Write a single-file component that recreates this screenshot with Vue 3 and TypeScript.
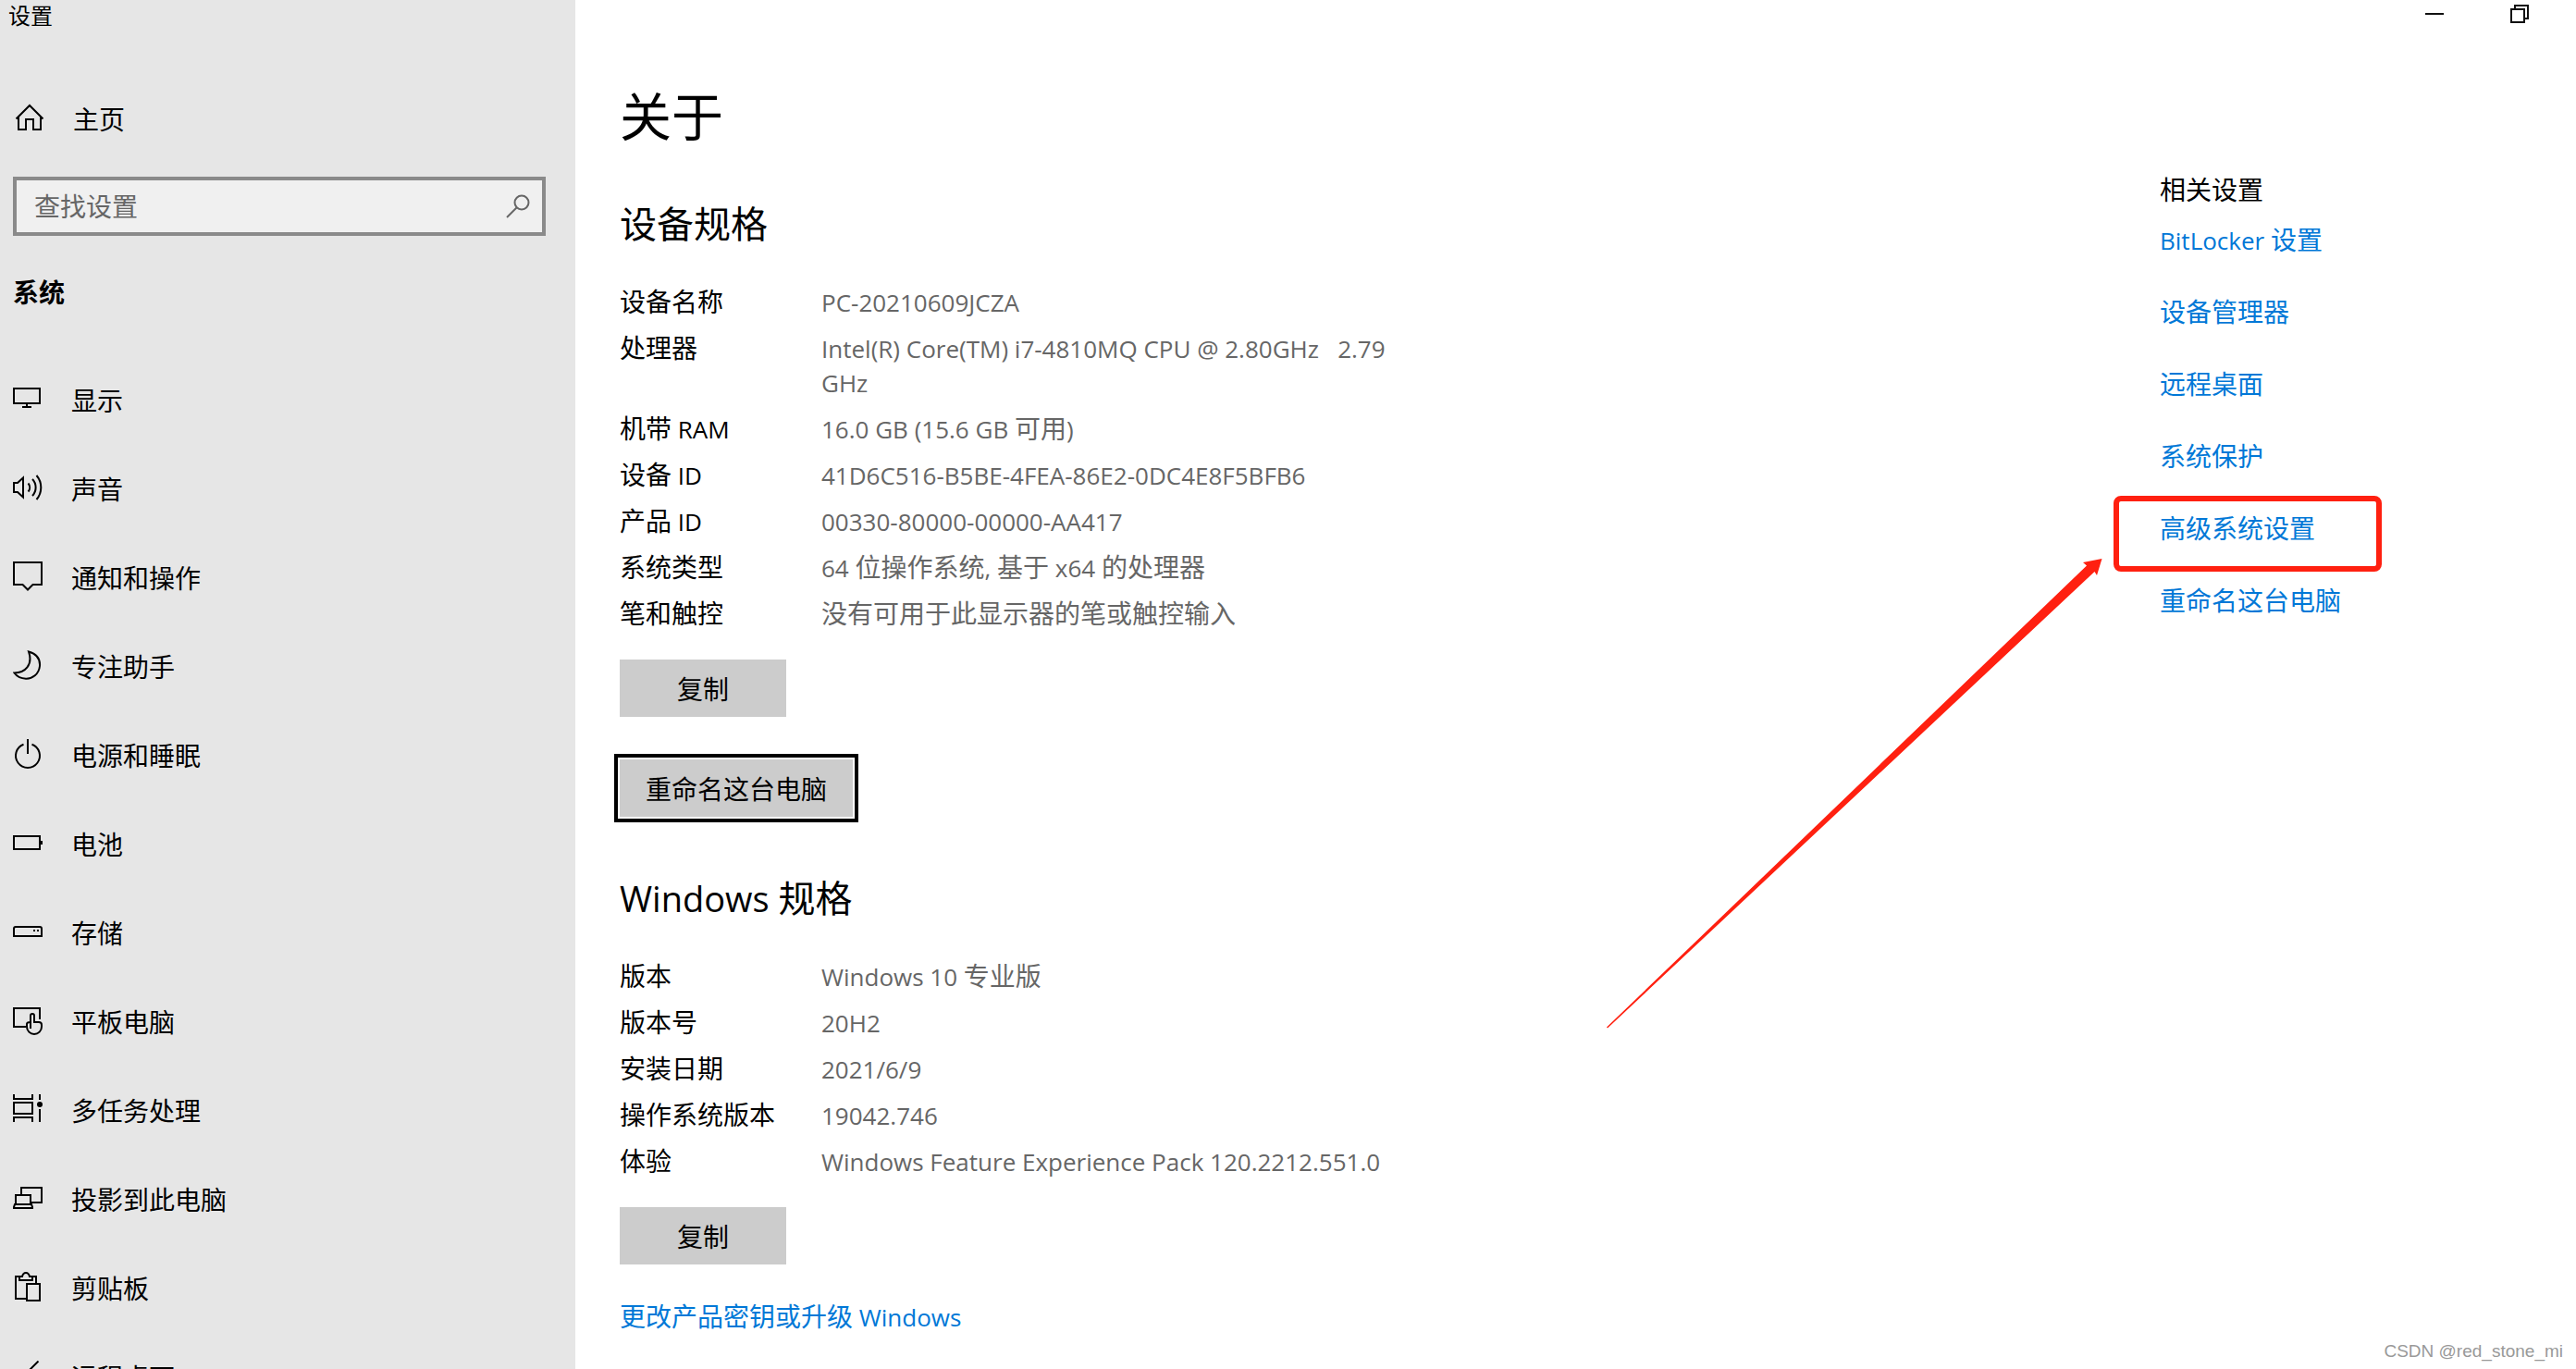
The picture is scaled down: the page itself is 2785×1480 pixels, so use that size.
<script setup lang="ts">
import { ref } from 'vue'

interface Run {
  text: string
  latin: boolean
}

interface Spec {
  label: string
  value: string
}

interface NavItem {
  label: string
  /** Stroked outlines on a 32 x 32 grid. */
  path: string
  /** Solid parts on the same grid. */
  solid?: string
}

const query = ref('')

/** Splits mixed text so that Latin runs can be set a little smaller than the Chinese ones. */
function runs(text: string): Run[] {
  const parts = text.match(/[\u0020-\u00ff]+|[^\u0020-\u00ff]+/g) ?? []
  return parts.map((part) => ({ text: part, latin: /[\u0020-\u00ff]/.test(part) }))
}

const navItems: NavItem[] = [
  { label: '显示', path: 'M1 5H29V21H1ZM15 21V25M10 25H20' },
  {
    label: '声音',
    path: 'M1 11H5L11 5.5V26.5L5 21H1ZM16.5 11.5A7 7 0 0 1 16.5 20.5M21 7A13 13 0 0 1 21 25M25.5 3A20 20 0 0 1 25.5 29',
  },
  { label: '通知和操作', path: 'M1 1H31V25H21.5L16 30.5L10.5 25H1Z' },
  { label: '专注助手', path: 'M17 1.5C26 4 29.5 10 29 17C28 26 21 31 14 30.7C8 30.5 4 28 1.5 24.5C13 24.5 22 16 17 1.5Z' },
  { label: '电源和睡眠', path: 'M16 0V16M11.5 5.8A13 13 0 1 0 20.5 5.8' },
  { label: '电池', path: 'M1 9H29V23H1Z', solid: 'M30 14H32V18H30Z' },
  {
    label: '存储',
    path: 'M1 21V13Q1 11 3 11H29Q31 11 31 13V21Z',
    solid: 'M22 14H24V16H22ZM26 14H28V16H26Z',
  },
  {
    label: '平板电脑',
    path: 'M14 23H1V3H29V15M19 25V11A2 2 0 0 1 23 11V18H28Q31 18 31 21V23A8 8 0 0 1 15 23V20Q15 18 19 18',
  },
  {
    label: '多任务处理',
    path: 'M1 0V5H21V0M1 9H21V21H1ZM1 30V25H21V30M29 0V6M29 16V30',
    solid: 'M26 11A3 3 0 1 0 32 11A3 3 0 1 0 26 11Z',
  },
  { label: '投影到此电脑', path: 'M9 12V5H31V21H20M3 22V13H19V22M2 23H20L21 26V27H1V26Z' },
  {
    label: '剪贴板',
    path: 'M14 29H3V5H10M18 5H25V13M7 5V9H21V5H18Q17 1 14 1Q11 1 10 5H7M15 13H29V31H15Z',
  },
  { label: '远程桌面', path: 'M27.5 .5L14 14L27.5 27.5M4 12L14 20L4 28' },
]

const deviceSpecs: Spec[] = [
  { label: '设备名称', value: 'PC-20210609JCZA' },
  { label: '处理器', value: 'Intel(R) Core(TM) i7-4810MQ CPU @ 2.80GHz\u00a0\u00a0 2.79 GHz' },
  { label: '机带 RAM', value: '16.0 GB (15.6 GB 可用)' },
  { label: '设备 ID', value: '41D6C516-B5BE-4FEA-86E2-0DC4E8F5BFB6' },
  { label: '产品 ID', value: '00330-80000-00000-AA417' },
  { label: '系统类型', value: '64 位操作系统, 基于 x64 的处理器' },
  { label: '笔和触控', value: '没有可用于此显示器的笔或触控输入' },
]

const windowsSpecs: Spec[] = [
  { label: '版本', value: 'Windows 10 专业版' },
  { label: '版本号', value: '20H2' },
  { label: '安装日期', value: '2021/6/9' },
  { label: '操作系统版本', value: '19042.746' },
  { label: '体验', value: 'Windows Feature Experience Pack 120.2212.551.0' },
]

const relatedLinks: { label: string; marked?: boolean }[] = [
  { label: 'BitLocker 设置' },
  { label: '设备管理器' },
  { label: '远程桌面' },
  { label: '系统保护' },
  { label: '高级系统设置', marked: true },
  { label: '重命名这台电脑' },
]

function copySpecs(specs: Spec[]): void {
  navigator.clipboard?.writeText(specs.map((s) => `${s.label}\t${s.value}`).join('\n'))
}
</script>

<template>
  <div class="window">
    <aside class="sidebar">
      <div class="app-title">设置</div>
      <a class="home" href="#home">
        <svg class="icon" viewBox="0 0 32 32" aria-hidden="true">
          <path d="M1.5 17.5L16 3L30.5 17.5M4 15V29H12V18H20V29H28V15" />
        </svg>
        <span>主页</span>
      </a>
      <form class="search" role="search" @submit.prevent>
        <input v-model="query" type="text" placeholder="查找设置" aria-label="查找设置" />
        <button type="submit" aria-label="搜索">
          <svg viewBox="0 0 26 26" aria-hidden="true">
            <circle cx="17" cy="9" r="7.5" />
            <path d="M11.5 14.5L1 25" />
          </svg>
        </button>
      </form>
      <h2 class="group">系统</h2>
      <nav aria-label="系统">
        <a v-for="item in navItems" :key="item.label" class="nav-item" href="#">
          <svg class="icon" viewBox="0 0 32 32" aria-hidden="true">
            <path :d="item.path" />
            <path v-if="item.solid" class="solid" :d="item.solid" />
          </svg>
          <span>{{ item.label }}</span>
        </a>
      </nav>
    </aside>

    <div class="pane">
      <header class="title-bar">
        <button type="button" aria-label="最小化">
          <svg viewBox="0 0 20 20" aria-hidden="true"><path d="M0 10H20" /></svg>
        </button>
        <button type="button" aria-label="还原">
          <svg viewBox="0 0 20 20" aria-hidden="true">
            <path d="M1 5H15V19H1ZM5 5V1H19V15H15" />
          </svg>
        </button>
      </header>

      <div class="body">
        <main class="about">
          <h1>关于</h1>

          <section>
            <h2>设备规格</h2>
            <table>
              <tbody>
                <tr v-for="spec in deviceSpecs" :key="spec.label">
                  <th scope="row">
                    <span v-for="(run, i) in runs(spec.label)" :key="i" :class="{ latin: run.latin }">{{ run.text }}</span>
                  </th>
                  <td>
                    <span v-for="(run, i) in runs(spec.value)" :key="i" :class="{ latin: run.latin }">{{ run.text }}</span>
                  </td>
                </tr>
              </tbody>
            </table>
            <button class="action copy" type="button" @click="copySpecs(deviceSpecs)">复制</button>
            <button class="action rename" type="button">重命名这台电脑</button>
          </section>

          <section class="windows">
            <h2>
              <span v-for="(run, i) in runs('Windows 规格')" :key="i" :class="{ latin: run.latin }">{{ run.text }}</span>
            </h2>
            <table>
              <tbody>
                <tr v-for="spec in windowsSpecs" :key="spec.label">
                  <th scope="row">{{ spec.label }}</th>
                  <td>
                    <span v-for="(run, i) in runs(spec.value)" :key="i" :class="{ latin: run.latin }">{{ run.text }}</span>
                  </td>
                </tr>
              </tbody>
            </table>
            <button class="action copy" type="button" @click="copySpecs(windowsSpecs)">复制</button>
            <a class="upgrade" href="#upgrade">
              <span v-for="(run, i) in runs('更改产品密钥或升级 Windows')" :key="i" :class="{ latin: run.latin }">{{ run.text }}</span>
            </a>
          </section>
        </main>

        <aside class="related">
          <h3>相关设置</h3>
          <ul>
            <li v-for="link in relatedLinks" :key="link.label">
              <a href="#">
                <span v-for="(run, i) in runs(link.label)" :key="i" :class="{ latin: run.latin }">{{ run.text }}</span>
              </a>
              <div v-if="link.marked" class="marker" aria-hidden="true">
                <svg class="arrow" viewBox="0 0 536 508">
                  <path d="M0 506.500L519 7.500L515 4L535.500 0L530 18L527.500 14L1 507.500Z" />
                </svg>
              </div>
            </li>
          </ul>
        </aside>
      </div>
    </div>

    <div class="watermark">CSDN @red_stone_mi</div>
  </div>
</template>

<style>
body {
  margin: 0;
  background: #fff;
}
</style>

<style scoped>
.window {
  position: relative;
  display: flex;
  height: 100vh;
  overflow: hidden;
  background: #fff;
  color: #000;
  font-family: 'Open Sans', 'Noto Sans CJK SC', sans-serif;
  font-size: 28px;
  line-height: 37px;
}

h1,
h2,
h3 {
  margin: 0;
  font-weight: 400;
}

a {
  color: #0078d7;
  text-decoration: none;
}

button {
  border: 0;
  padding: 0;
  background: none;
  color: inherit;
  font: inherit;
}

.latin {
  font-size: 26px;
  line-height: 1;
}

/* Sidebar */
.sidebar {
  flex: 0 0 622px;
  box-sizing: border-box;
  background: #e6e6e6;
}

.app-title {
  padding-left: 9px;
  font-size: 24px;
  line-height: 34px;
}

.icon {
  flex: none;
  width: 32px;
  height: 32px;
  margin-bottom: 4px;
  fill: none;
  stroke: #000;
  stroke-width: 2;
}

.icon .solid {
  fill: #000;
  stroke: none;
}

.home {
  display: flex;
  align-items: center;
  gap: 31px;
  height: 48px;
  margin-top: 71px;
  padding-left: 16px;
  color: #000;
}

.search {
  display: flex;
  align-items: center;
  box-sizing: border-box;
  height: 64px;
  margin: 38px 32px 0 14px;
  border: 4px solid #8a8a8a;
  background: #f0f0f0;
}

.search input {
  flex: 1;
  min-width: 0;
  height: 100%;
  box-sizing: border-box;
  border: 0;
  padding: 0 0 0 19px;
  outline: 0;
  background: none;
  color: #000;
  font: inherit;
}

.search input::placeholder {
  color: #666;
  opacity: 1;
}

.search button {
  display: flex;
  padding: 0 13px;
}

.search svg {
  width: 26px;
  height: 26px;
  fill: none;
  stroke: #666;
  stroke-width: 2;
}

.group {
  margin-top: 41px;
  padding-left: 14px;
  font-size: 28px;
  font-weight: 700;
  line-height: 40px;
}

nav {
  margin-top: 49px;
}

.nav-item {
  display: flex;
  align-items: center;
  gap: 31px;
  height: 96px;
  padding-left: 14px;
  color: #000;
}

/* Main pane */
.pane {
  display: flex;
  flex: 1;
  flex-direction: column;
  min-width: 0;
}

.title-bar {
  display: flex;
  justify-content: flex-end;
  height: 30px;
  padding-right: 15px;
}

.title-bar button {
  display: flex;
  align-items: center;
  justify-content: center;
  width: 92px;
}

.title-bar svg {
  width: 20px;
  height: 20px;
  fill: none;
  stroke: #111;
  stroke-width: 2;
}

.body {
  display: flex;
  flex: 1;
  justify-content: space-between;
}

.about {
  flex: 0 1 900px;
  padding: 59px 0 0 48px;
}

h1 {
  font-size: 56px;
  line-height: 72px;
}

.about h2 {
  margin: 55px 0 40px;
  font-size: 40px;
  line-height: 52px;
}

.about h2 .latin {
  font-size: 38px;
}

.about .windows h2 {
  margin-top: 62px;
}

table {
  border-collapse: collapse;
}

th,
td {
  padding: 0 0 13px;
  font-weight: 400;
  text-align: left;
  vertical-align: top;
}

th {
  width: 218px;
}

td {
  width: 660px;
  color: #666;
}

.action {
  display: block;
  height: 62px;
  padding-top: 2px;
  background: #ccc;
}

.copy {
  width: 180px;
  margin-top: 18px;
}

.rename {
  margin-top: 46px;
  padding-right: 28px;
  padding-left: 28px;
  outline: 4px solid #000;
  outline-offset: 2px;
}

.upgrade {
  display: inline-block;
  margin-top: 38px;
}

/* Related settings */
.related {
  flex: 0 0 450px;
  padding-top: 157px;
}

.related h3 {
  font-size: 28px;
}

.related ul {
  display: flex;
  flex-direction: column;
  gap: 41px;
  margin: 17px 0 0;
  padding: 0;
  list-style: none;
}

.related li {
  position: relative;
}

/* Callout over the highlighted link */
.marker {
  position: absolute;
  top: -17px;
  left: -50px;
  box-sizing: border-box;
  width: 290px;
  height: 82px;
  border: 6px solid #ff2010;
  border-radius: 8px;
  pointer-events: none;
}

.arrow {
  position: absolute;
  top: 62px;
  right: 296px;
  width: 536px;
  height: 508px;
  fill: #ff2010;
}

.watermark {
  position: absolute;
  right: 14px;
  bottom: 7px;
  color: #999;
  font-family: 'Liberation Sans', sans-serif;
  font-size: 19px;
  line-height: 24px;
}
</style>
